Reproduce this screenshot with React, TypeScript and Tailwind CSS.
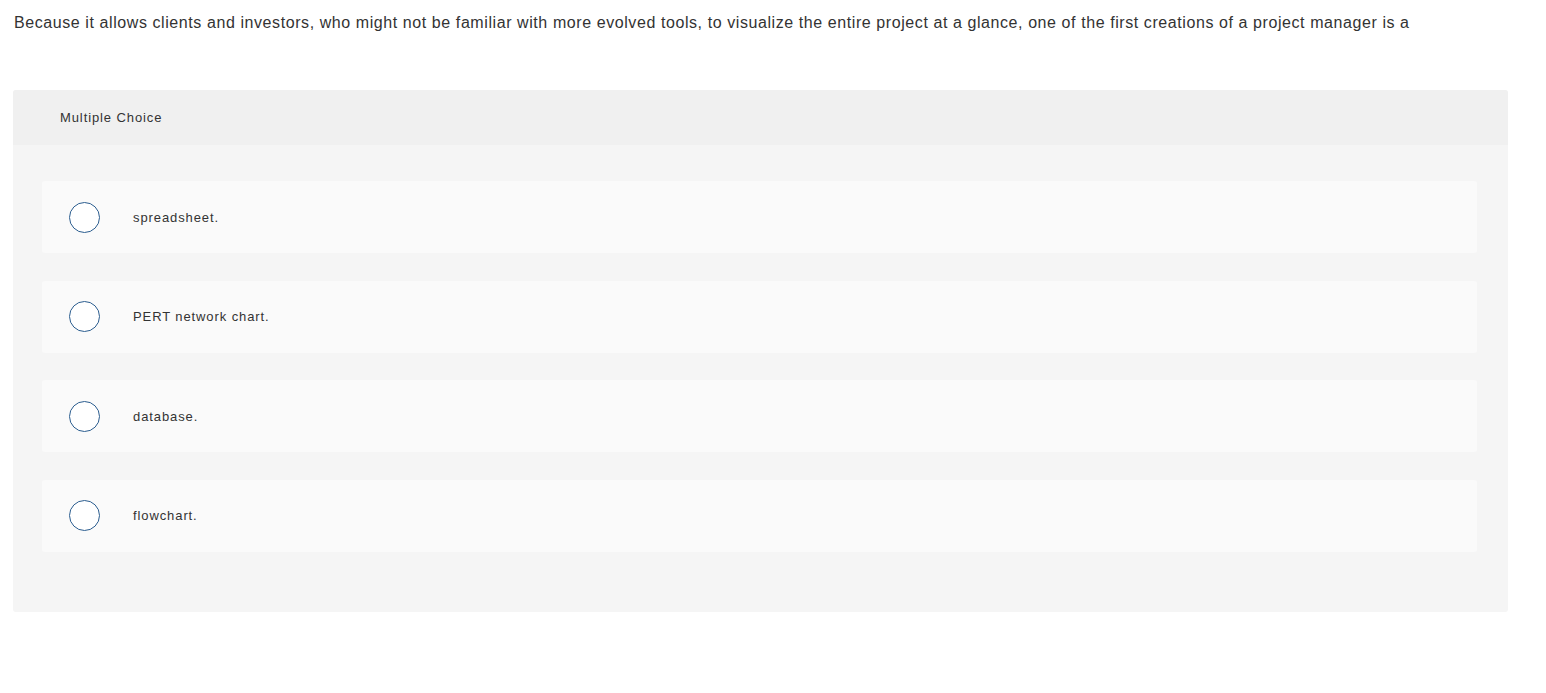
const options = ["spreadsheet.", "PERT network chart.", "database.", "flowchart."];

const App = () => {
  return (
    <div className="min-h-screen bg-white font-['Liberation_Sans',Arial,sans-serif] text-[#333]">
      <p className="pl-[14px] pt-[12px] text-[16px] leading-[22px] tracking-[0.58px] text-[#333]">
        Because it allows clients and investors, who might not be familiar with more evolved tools, to visualize the entire project at a glance, one of the first creations of a project manager is a
      </p>
      <div className="ml-[13px] mt-[56px] w-[1495px] overflow-hidden rounded-[3px] bg-[#f5f5f5]">
        <div className="flex h-[55px] items-center bg-[#f0f0f0] pl-[47px] pt-[1px] text-[13px] tracking-[0.9px] text-[#333]">
          Multiple Choice
        </div>
        <div className="flex flex-col gap-[27.5px] pl-[29px] pr-[31px] pt-[36px] pb-[60px]">
          {options.map((opt) => (
            <div key={opt} className="flex h-[72px] items-center rounded-[3px] bg-[#fafafa]">
              <span className="ml-[27px] h-[31px] w-[31px] shrink-0 rounded-full border-[1.5px] border-[#2b5d8f] bg-white" />
              <span className="ml-[33px] pt-[1px] text-[13px] tracking-[0.9px] text-[#333]">{opt}</span>
            </div>
          ))}
        </div>
      </div>
    </div>
  );
};

export default App;
